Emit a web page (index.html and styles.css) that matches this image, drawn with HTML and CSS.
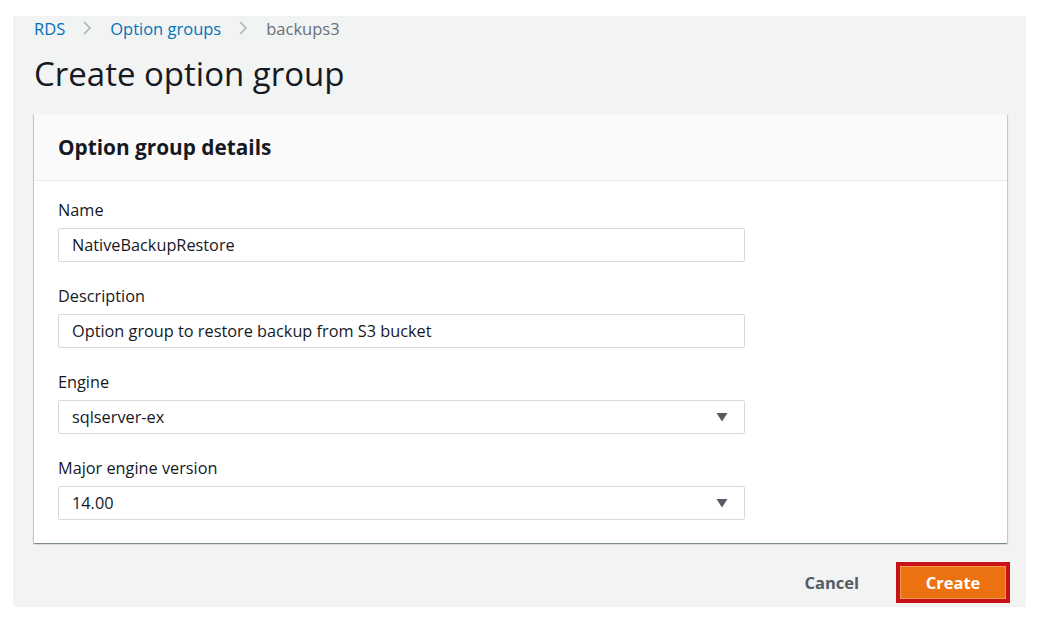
FILE: index.html
```html
<!DOCTYPE html>
<html>
<head>
<meta charset="utf-8">
<link rel="stylesheet" href="styles.css">
</head>
<body>
<div class="panel">
  <nav class="crumbs">
    <a class="crumb-link">RDS</a>
    <svg class="sep" width="10" height="16" viewBox="0 0 10 16"><path d="M2 2 L8 8 L2 14" fill="none" stroke="#aab7b8" stroke-width="1.6"/></svg>
    <a class="crumb-link">Option groups</a>
    <svg class="sep" width="10" height="16" viewBox="0 0 10 16"><path d="M2 2 L8 8 L2 14" fill="none" stroke="#aab7b8" stroke-width="1.6"/></svg>
    <span class="crumb-cur">backups3</span>
  </nav>
  <h1 class="title">Create option group</h1>
  <section class="card">
    <div class="card-head">Option group details</div>
    <div class="card-body">
      <div class="field">
        <label class="label">Name</label>
        <div class="input">NativeBackupRestore</div>
      </div>
      <div class="field">
        <label class="label">Description</label>
        <div class="input">Option group to restore backup from S3 bucket</div>
      </div>
      <div class="field">
        <label class="label">Engine</label>
        <div class="input select">sqlserver-ex<svg class="caret" width="12" height="10" viewBox="0 0 12 10"><path d="M0.5 1 L11.5 1 L6 9.5 Z" fill="#545b64"/></svg></div>
      </div>
      <div class="field">
        <label class="label">Major engine version</label>
        <div class="input select">14.00<svg class="caret" width="12" height="10" viewBox="0 0 12 10"><path d="M0.5 1 L11.5 1 L6 9.5 Z" fill="#545b64"/></svg></div>
      </div>
    </div>
  </section>
  <div class="actions">
    <button class="btn-cancel">Cancel</button>
    <button class="btn-create">Create</button>
  </div>
</div>
</body>
</html>
```
FILE: styles.css
```css
html, body {
  margin: 0;
  padding: 0;
  background: #ffffff;
}
body {
  font-family: "Open Sans", "Noto Sans", sans-serif;
  color: #16191f;
  padding: 16px 14px 0 13px;
}
.panel {
  width: 1013px;
  height: 591px;
  background: #f2f3f3;
  box-sizing: border-box;
  padding: 0 19px 0 21px;
}
.crumbs {
  display: flex;
  align-items: center;
  height: 24px;
  font-size: 16.5px;
}
.crumb-link {
  color: #0073bb;
}
.sep {
  margin: 0 18px 0 17px;
}
.crumb-cur {
  color: #687078;
}
.title {
  margin: 10px 0 0 0;
  font-size: 33px;
  font-weight: 400;
  line-height: 48px;
  color: #16191f;
}
.card {
  margin-top: 16px;
  width: 973px;
  background: #ffffff;
  box-shadow: 0 1px 1px 0 rgba(0,28,36,0.3), 1px 1px 1px 0 rgba(0,28,36,0.15), -1px 1px 1px 0 rgba(0,28,36,0.15);
}
.card-head {
  background: #fafafa;
  border-bottom: 1px solid #eaeded;
  height: 67px;
  box-sizing: border-box;
  padding: 0 24px;
  display: flex;
  align-items: center;
  font-size: 20.8px;
  font-weight: 700;
  color: #16191f;
}
.card-body {
  padding: 19px 24px 23px 24px;
  display: flex;
  flex-direction: column;
  gap: 24px;
}
.field {
  display: flex;
  flex-direction: column;
}
.label {
  font-size: 16.3px;
  line-height: 20px;
  color: #16191f;
  margin-bottom: 8px;
}
.input {
  width: 687px;
  height: 34px;
  box-sizing: border-box;
  border: 1px solid #d5dbdb;
  border-radius: 2px;
  background: #fff;
  padding: 0 13px;
  display: flex;
  align-items: center;
  font-size: 16.3px;
  color: #16191f;
}
.select {
  justify-content: space-between;
  padding-right: 16px;
}
.actions {
  display: flex;
  justify-content: flex-end;
  align-items: center;
  margin-top: 19px;
  width: 976px;
}
.btn-cancel {
  background: none;
  border: none;
  font-family: inherit;
  font-size: 16.5px;
  font-weight: 700;
  color: #545b64;
  margin-right: 37px;
  padding: 0;
}
.btn-create {
  width: 114px;
  height: 41px;
  box-sizing: border-box;
  background: #ec7211;
  border: 4px solid #c8121a;
  box-shadow: inset 0 0 0 1px #f59a4c;
  font-family: inherit;
  font-size: 16.5px;
  font-weight: 700;
  color: #ffffff;
  padding: 0;
}
```
